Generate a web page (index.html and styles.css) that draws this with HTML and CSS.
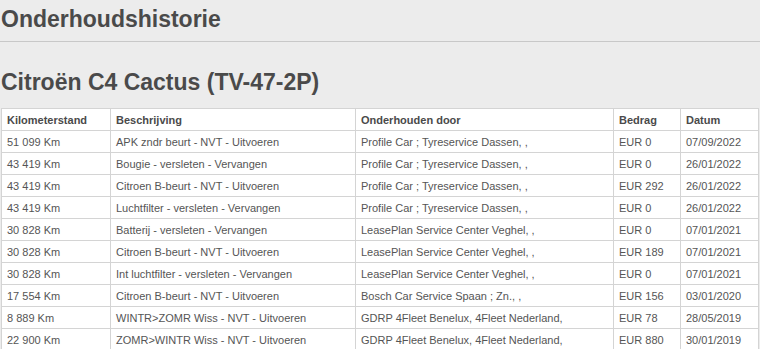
FILE: index.html
```html
<!DOCTYPE html>
<html lang="nl">
<head>
<meta charset="utf-8">
<title>Onderhoudshistorie</title>
<link rel="stylesheet" href="styles.css">
</head>
<body>
  <div class="page">
    <h1 class="page-title">Onderhoudshistorie</h1>
    <h2 class="car-title">Citroën C4 Cactus (TV-47-2P)</h2>
    <table class="history">
      <thead>
        <tr>
          <th class="col-km">Kilometerstand</th>
          <th class="col-desc">Beschrijving</th>
          <th class="col-by">Onderhouden door</th>
          <th class="col-amount">Bedrag</th>
          <th class="col-date">Datum</th>
        </tr>
      </thead>
      <tbody>
        <tr><td>51 099 Km</td><td>APK zndr beurt - NVT - Uitvoeren</td><td>Profile Car ; Tyreservice Dassen, ,</td><td>EUR 0</td><td>07/09/2022</td></tr>
        <tr><td>43 419 Km</td><td>Bougie - versleten - Vervangen</td><td>Profile Car ; Tyreservice Dassen, ,</td><td>EUR 0</td><td>26/01/2022</td></tr>
        <tr><td>43 419 Km</td><td>Citroen B-beurt - NVT - Uitvoeren</td><td>Profile Car ; Tyreservice Dassen, ,</td><td>EUR 292</td><td>26/01/2022</td></tr>
        <tr><td>43 419 Km</td><td>Luchtfilter - versleten - Vervangen</td><td>Profile Car ; Tyreservice Dassen, ,</td><td>EUR 0</td><td>26/01/2022</td></tr>
        <tr><td>30 828 Km</td><td>Batterij - versleten - Vervangen</td><td>LeasePlan Service Center Veghel, ,</td><td>EUR 0</td><td>07/01/2021</td></tr>
        <tr><td>30 828 Km</td><td>Citroen B-beurt - NVT - Uitvoeren</td><td>LeasePlan Service Center Veghel, ,</td><td>EUR 189</td><td>07/01/2021</td></tr>
        <tr><td>30 828 Km</td><td>Int luchtfilter - versleten - Vervangen</td><td>LeasePlan Service Center Veghel, ,</td><td>EUR 0</td><td>07/01/2021</td></tr>
        <tr><td>17 554 Km</td><td>Citroen B-beurt - NVT - Uitvoeren</td><td>Bosch Car Service Spaan ; Zn., ,</td><td>EUR 156</td><td>03/01/2020</td></tr>
        <tr><td>8 889 Km</td><td>WINTR&gt;ZOMR Wiss - NVT - Uitvoeren</td><td>GDRP 4Fleet Benelux, 4Fleet Nederland,</td><td>EUR 78</td><td>28/05/2019</td></tr>
        <tr><td>22 900 Km</td><td>ZOMR&gt;WINTR Wiss - NVT - Uitvoeren</td><td>GDRP 4Fleet Benelux, 4Fleet Nederland,</td><td>EUR 880</td><td>30/01/2019</td></tr>
      </tbody>
    </table>
  </div>
</body>
</html>
```

FILE: styles.css
```css
html, body {
  margin: 0;
  padding: 0;
  background: #ececec;
}

.page {
  font-family: "Liberation Sans", Arial, sans-serif;
  color: #555;
}

.page-title {
  margin: 0;
  padding: 6px 0 0 1px;
  height: 35px;
  font-size: 23px;
  line-height: 26px;
  font-weight: bold;
  color: #4a4a4a;
  border-bottom: 1px solid #c8c8c8;
}

.car-title {
  margin: 0;
  padding: 26px 0 0 1px;
  height: 40px;
  font-size: 23px;
  line-height: 28px;
  font-weight: bold;
  color: #4a4a4a;
}

.history {
  margin-left: 1px;
  width: 758px;
  border-collapse: collapse;
  background: #fff;
  font-size: 11px;
}

.history th,
.history td {
  border: 1px solid #d4d4d4;
  height: 21px;
  padding: 0 5px;
  text-align: left;
  white-space: nowrap;
  color: #555;
}

.history th {
  font-weight: bold;
  color: #4a4a4a;
}

.col-km { width: 98px; }
.col-desc { width: 234px; }
.col-by { width: 247px; }
.col-amount { width: 56px; }
.col-date { width: auto; }
```
